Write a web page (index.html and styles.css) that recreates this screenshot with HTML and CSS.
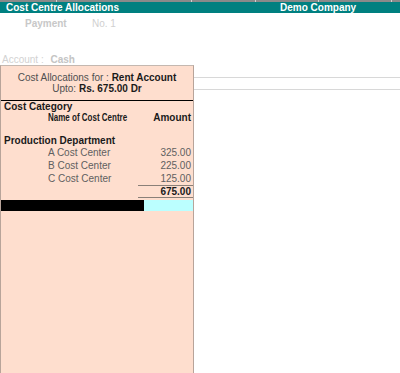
FILE: index.html
```html
<!DOCTYPE html>
<html>
<head>
<meta charset="utf-8">
<link rel="stylesheet" href="styles.css">
</head>
<body>
<div class="topline"></div>
<div class="titlebar">
  <div class="title">Cost Centre Allocations</div>
  <div class="company">Demo Company</div>
</div>
<div class="voucher-head">
  <span class="vtype">Payment</span>
  <span class="vno">No. 1</span>
</div>
<div class="account-row">Account : <b>Cash</b></div>
<div class="main">
  <div class="panel">
    <div class="alloc-head">
      <div>Cost Allocations for : <b>Rent Account</b></div>
      <div>Upto: <b>Rs. 675.00 Dr</b></div>
    </div>
    <div class="rule"></div>
    <div class="hdr-cat">Cost Category</div>
    <div class="row hdr">
      <div class="name"><span class="narrow">Name of Cost Centre</span></div>
      <div class="amt">Amount</div>
    </div>
    <div class="cat">Production Department</div>
    <div class="row item">
      <div class="name">A Cost Center</div>
      <div class="amt">325.00</div>
    </div>
    <div class="row item">
      <div class="name">B Cost Center</div>
      <div class="amt">225.00</div>
    </div>
    <div class="row item">
      <div class="name">C Cost Center</div>
      <div class="amt">125.00</div>
    </div>
    <div class="row total">
      <div class="name"></div>
      <div class="amt">675.00</div>
    </div>
    <div class="cursor">
      <div class="cursor-black"></div>
      <div class="cursor-cyan"></div>
    </div>
  </div>
  <div class="side">
    <div class="side-line first"></div>
    <div class="side-line second"></div>
  </div>
</div>
</body>
</html>
```

FILE: styles.css
```css
html, body {
  margin: 0;
  padding: 0;
}
body {
  width: 400px;
  height: 373px;
  overflow: hidden;
  background: #ffffff;
  font-family: "Liberation Sans", Arial, sans-serif;
  font-size: 10px;
  color: #1a1a1a;
}
.topline {
  height: 2px;
  background:
    linear-gradient(#d0d0d0, #d0d0d0) 56px 0 / 1px 2px no-repeat,
    linear-gradient(#d0d0d0, #d0d0d0) 191px 0 / 1px 2px no-repeat,
    linear-gradient(#d0d0d0, #d0d0d0) 255px 0 / 1px 2px no-repeat,
    linear-gradient(#d0d0d0, #d0d0d0) 318px 0 / 1px 2px no-repeat,
    linear-gradient(#d0d0d0, #d0d0d0) 391px 0 / 1px 2px no-repeat,
    #8a8a8a;
}
.titlebar {
  display: grid;
  grid-template-columns: 280px 1fr;
  height: 11px;
  line-height: 11px;
  background: #008080;
  color: #ffffff;
  font-weight: bold;
}
.title {
  padding-left: 6px;
}
.voucher-head {
  display: flex;
  height: 10px;
  line-height: 10px;
  margin-top: 6px;
  padding-left: 25px;
  color: #c8c8c8;
}
.vtype {
  width: 67px;
  font-weight: bold;
}
.vno {
  color: #d0d0d0;
}
.account-row {
  height: 10px;
  line-height: 10px;
  margin-top: 26px;
  padding-left: 2px;
  color: #d2d2d2;
}
.account-row b {
  margin-left: 4px;
  color: #c4c4c4;
}
.main {
  display: flex;
  height: 308px;
}
.panel {
  width: 192px;
  flex: none;
  background: #fedece;
  border-top: 1px solid #c4b8b0;
  border-left: 1px solid #b8a49a;
  border-right: 1px solid #b8a49a;
}
.alloc-head {
  padding-top: 6px;
  text-align: center;
  line-height: 11px;
  color: #505050;
}
.alloc-head b {
  color: #1a1a1a;
}
.rule {
  margin-top: 6px;
  height: 1px;
  background: #000000;
}
.hdr-cat {
  padding-left: 3px;
  line-height: 11px;
  font-weight: bold;
}
.row {
  display: grid;
  grid-template-columns: minmax(0, 1fr) 55px;
  white-space: nowrap;
}
.name {
  padding-left: 47px;
  min-width: 0;
}
.amt {
  text-align: right;
  padding-right: 2px;
}
.hdr {
  line-height: 11px;
  font-weight: bold;
}
.narrow {
  display: inline-block;
  transform: scaleX(0.8);
  transform-origin: left center;
}
.cat {
  margin-top: 12px;
  padding-left: 3px;
  line-height: 11px;
  font-weight: bold;
}
.item {
  line-height: 13px;
  color: #606060;
}
.total {
  line-height: 11px;
  font-weight: bold;
}
.total .amt {
  border-top: 1px solid #8a8078;
  border-bottom: 1px solid #8a8078;
}
.cursor {
  display: flex;
  margin-top: 2px;
  height: 11px;
}
.cursor-black {
  width: 143px;
  background: #000000;
}
.cursor-cyan {
  flex: 1;
  background: #bbffff;
}
.side {
  flex: 1;
}
.side-line {
  height: 1px;
  background: #d8d8d8;
}
.side-line.first {
  margin-top: 12px;
}
.side-line.second {
  margin-top: 11px;
}
```
